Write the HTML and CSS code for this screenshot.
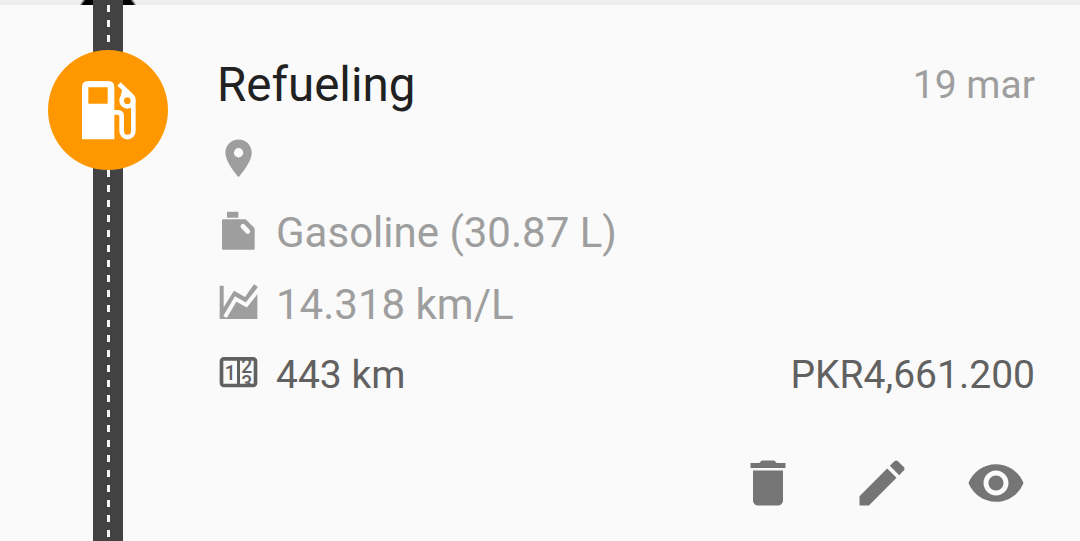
FILE: index.html
```html
<!DOCTYPE html>
<html lang="en">
<head>
    <meta charset="UTF-8">
    <title>Refueling</title>
    <link rel="stylesheet" href="styles.css">
</head>
<body>
<div class="timeline">
    <div class="previous"></div>
    <div class="road">
        <div class="dashes"></div>
    </div>
    <div class="badge">
        <svg viewBox="0 0 360 360">
            <path fill="#fff" fill-rule="evenodd" d="M120 93H181Q199 93 199 111V268H102V111Q102 93 120 93ZM121 112V161H179V112Z"/>
            <g fill="none" stroke="#fff" stroke-width="14">
                <path d="M198 187h11q12 0 12 12v45a17.500 17.500 0 0 0 35 0V150q0-7-6-13L213 102"/>
                <circle cx="238" cy="152" r="17"/>
                <path d="M230 118l-6 25"/>
            </g>
        </svg>
    </div>
</div>
<div class="entry">
    <div class="row header">
        <span class="title">Refueling</span>
        <span class="date">19 mar</span>
    </div>
    <div class="row place">
        <svg class="icon" viewBox="0 0 24 24">
            <path transform="translate(.5 .4) scale(.94)" d="M12 2C8.130 2 5 5.130 5 9c0 5.250 7 13 7 13s7-7.750 7-13c0-3.870-3.130-7-7-7zm0 9.500a2.500 2.500 0 0 1 0-5 2.500 2.500 0 0 1 0 5z"/>
        </svg>
    </div>
    <div class="row">
        <svg class="icon" viewBox="0 0 144 144">
            <path d="M36 8h34v18H36zM24 31H92L119 58V119Q119 122 116 122H24Q21 122 21 119V34Q21 31 24 31Z"/>
            <path d="M84 52L98 67" stroke="#fafafa" stroke-width="15" stroke-linecap="round"/>
        </svg>
        <span class="fuel">Gasoline (30.87 L)</span>
    </div>
    <div class="row">
        <svg class="icon" viewBox="0 0 144 144">
            <path d="M14 14H26V79L57 29L90 48L117 10L127 16V114H14Z"/>
            <path d="M30 108L62 54L94 72L132 24" fill="none" stroke="#fafafa" stroke-width="12"/>
        </svg>
        <span class="average">14.318 km/L</span>
    </div>
    <div class="row total">
        <svg class="icon" viewBox="0 0 144 144">
            <clipPath id="dial"><path d="M70 24H122V103H70Z"/></clipPath>
            <rect x="19.500" y="23.500" width="102" height="80" rx="7" fill="none" stroke="currentColor" stroke-width="11"/>
            <path d="M66 23h9v80h-9z"/>
            <text x="29" y="86">1</text>
            <g clip-path="url(#dial)">
                <text x="79" y="67">2</text>
                <text x="79" y="116">3</text>
            </g>
        </svg>
        <span class="distance">443 km</span>
        <span class="price">PKR4,661.200</span>
    </div>
    <div class="actions">
        <svg viewBox="0 0 24 24"><path d="M6 19c0 1.100.9 2 2 2h8c1.100 0 2-.9 2-2V7H6v12zM19 4h-3.500l-1-1h-5l-1 1H5v2h14V4z"/></svg>
        <svg viewBox="0 0 24 24"><path d="M3 17.250V21h3.750L17.810 9.940l-3.750-3.750L3 17.250zM20.710 7.040c.39-.39.39-1.020 0-1.410l-2.340-2.340c-.39-.39-1.020-.39-1.410 0l-1.830 1.830 3.750 3.750 1.830-1.830z"/></svg>
        <svg viewBox="0 0 24 24"><path d="M12 4.500C7 4.500 2.730 7.610 1 12c1.730 4.390 6 7.500 11 7.500s9.270-3.110 11-7.500c-1.730-4.390-6-7.500-11-7.500zM12 17c-2.760 0-5-2.240-5-5s2.240-5 5-5 5 2.240 5 5-2.240 5-5 5zm0-8c-1.660 0-3 1.340-3 3s1.340 3 3 3 3-1.340 3-3-1.340-3-3-3z"/></svg>
    </div>
</div>
</body>
</html>
```

FILE: styles.css
```css
* {
    box-sizing: border-box;
}
body {
    display: flex;
    margin: 0;
    height: 541px;
    overflow: hidden;
    background: linear-gradient(#eeeeee 5px, #fafafa 5px);
    font-family: Roboto, sans-serif;
    color: #9e9e9e;
}
svg {
    display: block;
    fill: currentColor;
}
.timeline {
    position: relative;
    width: 215px;
    flex: none;
}
/* bottom slice of the entry above */
.previous {
    position: absolute;
    left: 78px;
    top: 0;
    width: 60px;
    height: 5px;
    background: radial-gradient(circle at 30px 19px, #000 29px, #aaa 31px, #eee 32px);
}
.road {
    position: relative;
    width: 30px;
    height: 541px;
    margin-left: 93px;
    padding: 5px 0 0 13.5px;
    background-color: #424242;
}
.dashes {
    width: 3px;
    height: 536px;
    background: repeating-linear-gradient(#f5f5f5 0 7px, #424242 7px 15px);
}
.badge {
    position: absolute;
    left: 48px;
    top: 50px;
    width: 120px;
    height: 120px;
    border-radius: 50%;
    background-color: #ff9800;
}
.entry {
    flex: 1;
    padding: 49px 45px 0 0;
}
.row {
    display: flex;
    align-items: center;
    height: 72px;
    font-size: 42px;
    line-height: 72px;
    white-space: nowrap;
}
.header {
    justify-content: space-between;
}
.title {
    margin-left: 2px;
    font-size: 47.5px;
    color: #212121;
}
.date {
    font-size: 39px;
}
.place {
    height: 76px;
    padding-bottom: 1px;
}
.icon {
    width: 48px;
    height: 48px;
    margin-right: 13px;
}
.icon text {
    font-size: 58px;
    font-weight: 500;
}
.total {
    height: 68px;
    font-size: 39px;
    color: #616161;
}
.price {
    margin-left: auto;
}
.actions {
    display: flex;
    justify-content: flex-end;
    gap: 54px;
    margin-top: 44px;
    padding-right: 9px;
    color: #757575;
}
.actions svg {
    width: 60px;
    height: 60px;
}
```
